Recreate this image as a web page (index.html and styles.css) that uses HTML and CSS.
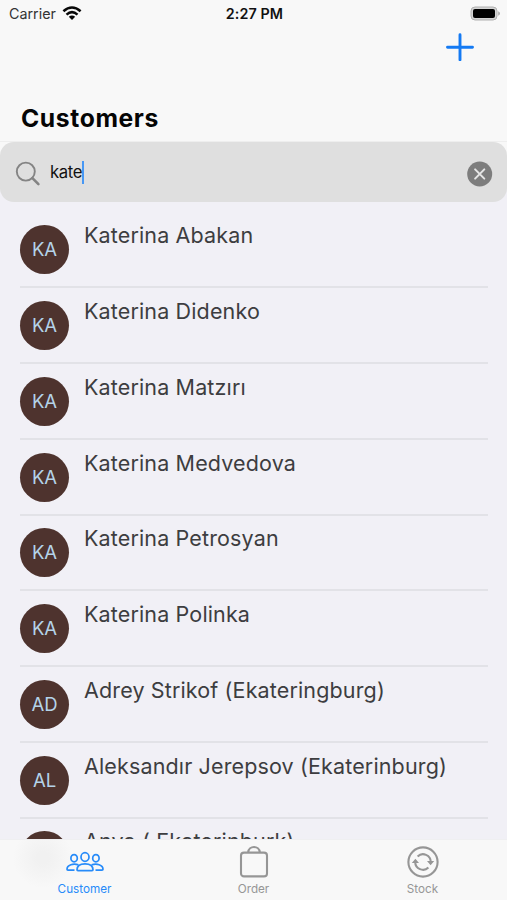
FILE: index.html
```html
<!DOCTYPE html>
<html lang="en">
<head>
<meta charset="utf-8">
<title>Customers</title>
<link rel="stylesheet" href="styles.css">
</head>
<body>
<div class="app">
  <header class="header">
    <div class="status">
      <div class="carrier"><span>Carrier</span>
        <svg class="wifi" width="20" height="15" viewBox="0 0 20 15"><g fill="none" stroke="#080808" stroke-width="2.5"><path d="M1.4 5.3Q10-2.3 18.6 5.3"/><path d="M4.5 8.6Q10 3.7 15.5 8.6"/></g><path d="M6.8 10.8Q10 8.2 13.2 10.8L10 14z" fill="#080808"/></svg>
      </div>
      <div class="time">2:27 PM</div>
      <svg class="battery" width="31" height="16" viewBox="0 0 31 16"><rect x="2" y="1" width="26" height="13" rx="4" fill="#d4d4d4" stroke="#b0b0b0" stroke-width="1"/><rect x="4" y="3" width="22" height="9" rx="2" fill="#000"/><path d="M29.2 5.2Q31 6 31 7.5T29.2 9.8z" fill="#aaa"/></svg>
    </div>
    <div class="actions"><svg width="28" height="28" viewBox="0 0 28 28"><path d="M14 1.8v25M1.5 14.3h25" stroke="#147af3" stroke-width="2.9" stroke-linecap="round"/></svg></div>
    <h1 class="title">Customers</h1>
  </header>
  <div class="search-wrap">
    <div class="search">
      <svg class="glass" width="26" height="26" viewBox="0 0 26 26" fill="none" stroke="#848484"><circle cx="10.8" cy="10.6" r="9" stroke-width="1.9"/><path d="M17.4 17.2l6 6" stroke-width="2.6" stroke-linecap="round"/></svg>
      <span class="query">kate</span><span class="caret"></span>
      <svg class="clear" width="26" height="26" viewBox="0 0 26 26"><circle cx="12.7" cy="13" r="12.5" fill="#7d7d7d"/><path d="M8.1 8.4l9.2 9.2M17.3 8.4l-9.2 9.2" stroke="#e6e6e6" stroke-width="2" stroke-linecap="round"/></svg>
    </div>
  </div>
  <main class="list">
    <div class="row"><div class="avatar">KA</div><div class="name">Katerina Abakan</div></div>
    <div class="row"><div class="avatar">KA</div><div class="name">Katerina Didenko</div></div>
    <div class="row"><div class="avatar">KA</div><div class="name">Katerina Matzırı</div></div>
    <div class="row"><div class="avatar">KA</div><div class="name">Katerina Medvedova</div></div>
    <div class="row"><div class="avatar">KA</div><div class="name">Katerina Petrosyan</div></div>
    <div class="row"><div class="avatar">KA</div><div class="name">Katerina Polinka</div></div>
    <div class="row"><div class="avatar">AD</div><div class="name">Adrey Strikof (Ekateringburg)</div></div>
    <div class="row"><div class="avatar">AL</div><div class="name">Aleksandır Jerepsov (Ekaterinburg)</div></div>
    <div class="row"><div class="avatar"></div><div class="name">Anya ( Ekaterinburk)</div></div>
  </main>
  <nav class="tabs">
    <div class="tab active">
      <svg width="38" height="34" viewBox="0 0 38 34" fill="none" stroke="currentColor" stroke-width="1.7" stroke-linejoin="round"><ellipse cx="19" cy="12" rx="4" ry="4.3"/><path d="M11 24.8c0-4 3.5-6 8-6s8 2 8 6q0 .8-1 .8H12q-1 0-1-.8z"/><ellipse cx="8.1" cy="13.2" rx="3.2" ry="3.6"/><ellipse cx="29.9" cy="13.2" rx="3.2" ry="3.6"/><path d="M12.4 19.9C7.4 18.2 1 19.8 1 24.3q0 .9 1 .9h6.5M25.6 19.9C30.6 18.2 37 19.8 37 24.3q0 .9-1 .9h-6.5"/></svg>
      <span>Customer</span>
    </div>
    <div class="tab">
      <svg width="34" height="34" viewBox="0 0 34 34" fill="none" stroke="currentColor" stroke-width="2.1"><rect x="4" y="7.6" width="26" height="23.8" rx="3"/><path d="M11.2 7.3C11.8 0.3 22.2 0.3 22.8 7.3"/></svg>
      <span>Order</span>
    </div>
    <div class="tab">
      <svg width="34" height="34" viewBox="0 0 34 34" fill="none" stroke="currentColor" stroke-width="2.1"><circle cx="17" cy="17" r="14.6"/><path d="M11.6 11.4a7.8 7.8 0 0 1 13.2 5.6M22.4 22.6A7.8 7.8 0 0 1 9.2 17"/><path d="M21 16h7.2l-3.6 4.2zM5.8 18h7.2l-3.6-4.2z" fill="currentColor" stroke="none"/></svg>
      <span>Stock</span>
    </div>
  </nav>
</div>
</body>
</html>
```
FILE: styles.css
```css
* { box-sizing: border-box; }
body { margin: 0; font-family: Inter, "Liberation Sans", sans-serif; }
.app { width: 507px; height: 900px; display: flex; flex-direction: column; overflow: hidden; background: #f1f0f6; }
.header { height: 142px; flex: none; background: #f8f8f8; border-bottom: 1px solid #eee; }
.status { height: 28px; display: grid; grid-template-columns: 1fr auto 1fr; align-items: center; padding: 0 7px 0 9px; font-size: 14.3px; color: #111; }
.carrier { display: flex; align-items: center; gap: 6px; color: #333; }
.carrier span, .time { margin-top: -1px; }
.wifi { margin-top: -2px; }
.time { font-weight: 600; letter-spacing: .1px; }
.battery { justify-self: end; margin-top: -1px; }
.actions { height: 40px; display: flex; justify-content: flex-end; padding: 5px 33px 0 0; }
.title { margin: 35px 0 0 21px; font-size: 24.7px; line-height: 30px; font-weight: 700; letter-spacing: .6px; color: #050505; }
.search-wrap { flex: none; background: linear-gradient(#f8f8f8 50%, #f1f0f6 50%); }
.search { height: 60px; border-radius: 14px; background: #dfdfdf; display: flex; align-items: center; padding: 3px 14px 0 15px; }
.query { margin: -3px 0 0 9px; font-size: 16.7px; letter-spacing: -.4px; color: #111; }
.caret { width: 2px; height: 23px; background: #4798f5; margin-top: -2px; }
.clear { margin-left: auto; }
.list { height: 637px; flex: none; overflow: hidden; padding: 10.5px 19px 0 20px; }
.row { height: 75.77px; display: flex; align-items: flex-start; gap: 14px; padding-top: 12.8px; border-bottom: 2px solid #e2e2e7; }
.avatar { width: 49px; height: 49px; flex: none; margin-right: 1px; border-radius: 50%; background: #4e332e; color: #b4d3e9; display: flex; align-items: center; justify-content: center; font-size: 18.5px; line-height: 22px; padding-bottom: 1px; }
.name { margin-top: -4px; font-size: 21.5px; line-height: 28px; letter-spacing: .14px; white-space: nowrap; color: #3d3d40; }
.tabs { height: 61px; flex: none; display: grid; grid-template-columns: repeat(3, 1fr); background: radial-gradient(circle at 43px 18px, #f1f1f1 6px, #f8f8f8 30px); border-top: 1px solid #efeff1; }
.tab { display: flex; flex-direction: column; align-items: center; padding-top: 5px; color: #969696; font-size: 11.7px; line-height: 16px; }
.tab span { margin-top: 2px; }
.active { color: #278bf9; }
```
